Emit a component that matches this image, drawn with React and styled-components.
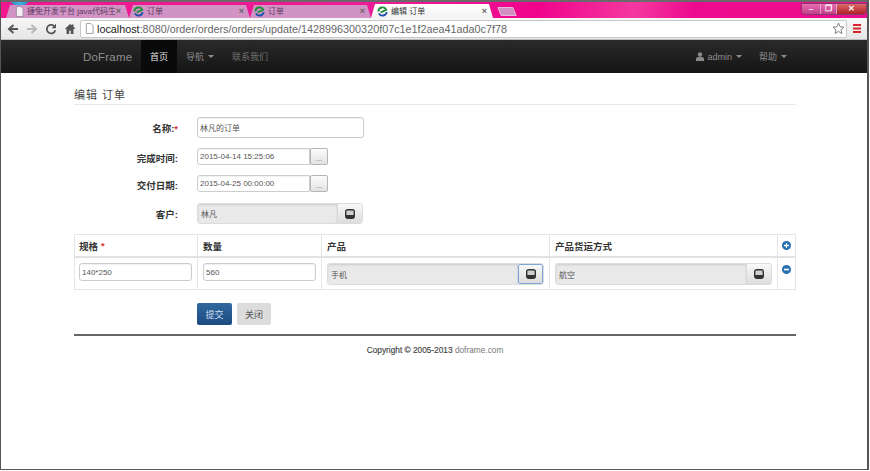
import React from "react";
import styled, { createGlobalStyle } from "styled-components";

const Global = createGlobalStyle`
  html, body { margin: 0; padding: 0; background: #fff; }
  body { width: 870px; height: 471px; overflow: hidden; font-family: "Liberation Sans", "Noto Sans CJK SC", sans-serif; }
  * { box-sizing: border-box; }
`;
const CJK = `"Liberation Sans", "Noto Sans CJK SC", sans-serif`;

const Win = styled.div`
  width: 869px; height: 470px; display: flex; flex-direction: column;
  border: 1px solid #555; border-top: 2px solid #6a6a6a; border-right: 2px solid #555; background: #fff; overflow: hidden;
`;
const TabStrip = styled.div`
  height: 16px; flex: none; display: flex; align-items: flex-end; padding-left: 5px; position: relative; overflow: hidden;
  background: linear-gradient(100deg, #f0188f 0%, #ec1b95 45%, #f0048c 62%, #f4389f 73%, #ee0a8e 80%, #ea0d8c 100%);
`;
const Orb = styled.div`
  position: absolute; left: 9px; top: -10px; width: 19px; height: 14px; border-radius: 50%;
  background: radial-gradient(circle at 50% 70%, #3fb6e6, #1a7bb8);
`;
const Tab = styled.div`
  width: ${p => p.$w}px; height: ${p => p.$active ? 14 : 13}px; flex: none;
  display: flex; align-items: center; padding: 0 ${p => p.$pr || 6}px 0 ${p => p.$pl || 5}px; gap: 3px; position: relative;
  background: ${p => p.$active ? "linear-gradient(#fff, #f2f2f2)" : "#d093c4"};
  clip-path: polygon(4px 0, calc(100% - 4px) 0, 100% 100%, 0 100%);
  font-size: 8px; color: ${p => p.$active ? "#333" : "#5c3a60"}; white-space: nowrap;
`;
const TabTitle = styled.span`flex: 1; min-width: 0; font-family: ${CJK}; line-height: 11px;`;
const TabClose = styled.span`font-size: 9px; font-weight: bold; color: #666; line-height: 1;`;
const NewTab = styled.div`
  width: 16px; height: 9px; margin-left: 6px; margin-bottom: 2px; flex: none; background: #d290c2;
  transform: skewX(22deg); border-radius: 1px; border: 1px solid #e8b8d8;
`;
const WinControls = styled.div`
  position: absolute; top: 1px; right: 0; width: 66px; height: 12px; display: flex;
  border: 1px solid #8a3a6a; border-radius: 0 0 4px 4px; overflow: hidden;
`;
const WinBtn = styled.div`
  flex: ${p => p.$f}; display: flex; align-items: center; justify-content: center;
  background: ${p => p.$bg}; border-right: 1px solid rgba(255,255,255,.45);
  color: #fff; font-size: 8px; font-weight: bold; line-height: 1; &:last-child { border-right: none; }
`;
const Toolbar = styled.div`
  height: 22px; flex: none; display: flex; align-items: center; background: linear-gradient(#f7f7f7, #e6e6e6);
  padding: 0 0 0 6px; border-bottom: 1px solid #bdbdbd;
`;
const ToolIcons = styled.div`width: 73px; flex: none; display: flex; gap: 7px; align-items: center;`;
const Omni = styled.div`
  flex: 1; min-width: 0; height: 18px; background: #fff; border: 1px solid #c8c8c8; border-radius: 2px;
  display: flex; align-items: center; padding: 0 1px 0 4px; gap: 3px;
  font-family: "Liberation Sans", sans-serif; font-size: 10.8px; color: #666; white-space: nowrap;
`;
const Host = styled.span`color: #222;`;
const UrlText = styled.span`flex: 1; min-width: 0;`;
const Menu = styled.div`width: 20px; flex: none; display: flex; justify-content: center;`;
const Navbar = styled.div`
  height: 33px; flex: none; background: linear-gradient(#2a2a2a, #151515); display: flex; align-items: stretch;
  padding-left: 72px; padding-right: 73px; font-size: 9px; color: #8d8d8d;
`;
const Brand = styled.div`
  font-size: 11.5px; display: flex; align-items: center; width: 68px; padding-left: 10px; color: #8f8f8f; letter-spacing: .2px; white-space: nowrap;
`;
const NavItem = styled.div`
  display: flex; align-items: center; gap: 3px; padding: 0 ${p => p.$px ?? 9}px;
  background: ${p => p.$active ? "#0a0a0a" : "transparent"};
  color: ${p => p.$active ? "#e2e2e2" : p.$dim ? "#6f6f6f" : "#8d8d8d"}; white-space: nowrap;
`;
const Caret = styled.i`
  width: 0; height: 0; border-left: 3px solid transparent; border-right: 3px solid transparent; border-top: 3px solid currentColor; margin-left: 1px;
`;
const NavSpacer = styled.div`flex: 1;`;
const Page = styled.main`flex: 1; display: flex; flex-direction: column; padding: 14px 0 0 73px; width: 795px; font-family: ${CJK};`;
const Legend = styled.div`
  font-size: 11px; letter-spacing: 1px; color: #444; height: 18px; border-bottom: 1px solid #e8e8e8; line-height: 17px;
`;
const Row = styled.div`
  display: flex; align-items: center; height: 21px; margin-top: ${p => p.$mt}px;
`;
const Label = styled.label`
  width: 104px; margin-right: 19px; text-align: right; font-size: 9.5px; font-weight: bold; color: #333; flex: none;
  padding-top: ${p => p.$pt || 0}px;
  em { color: #d33; font-style: normal; }
`;
const Input = styled.div`
  width: ${p => p.$w}px; height: ${p => p.$h || 21}px; flex: none; padding: 0 2px; display: flex; align-items: center;
  border: 1px solid #ccc; border-radius: 3px; background: #fff; font-size: 8px; color: #555; white-space: nowrap;
  box-shadow: inset 0 1px 1px rgba(0,0,0,.06);
`;
const DateInput = styled(Input)`border-radius: 3px 0 0 3px;`;
const Dots = styled.div`
  width: 18px; height: 17px; flex: none; border: 1px solid #b5b5b5; border-radius: 2px; background: linear-gradient(#fbfbfb, #e2e2e2);
  font-size: 8px; color: #777; display: flex; align-items: flex-end; justify-content: center; line-height: 11px;
`;
const Lookup = styled.div`
  width: ${p => p.$w}px; height: ${p => p.$h || 21}px; flex: none; display: flex; border-radius: 3px; overflow: hidden; border: 1px solid #dcdcdc;
`;
const LookupText = styled.div`
  flex: 1; background: #e9e9e9; font-size: 8px; color: #555; display: flex; align-items: center; padding-left: 3px;
  box-shadow: inset 0 1px 2px rgba(0,0,0,.12);
`;
const LookupBtn = styled.div`
  width: 25px; flex: none; display: flex; align-items: center; justify-content: center; background: linear-gradient(#f8f8f8, #dcdcdc);
  border-left: 1px solid #d8d8d8;
  ${p => p.$focus && "border: 1px solid #7fa6d9; border-radius: 2px; box-shadow: 0 0 2px #9dbde8;"}
`;
const Table = styled.div`
  margin-top: 10px; width: 722px; border: 1px solid #e6e6e6; display: grid; grid-template-columns: 123px 124px 228px 228px 1fr;
  grid-template-rows: 23px 31px; font-size: 10px;
`;
const Th = styled.div`
  display: flex; align-items: center; padding-left: 5px; font-weight: bold; color: #333; border-right: 1px solid #e6e6e6; border-bottom: 2px solid #e2e2e2;
  font-size: 9.5px; &:first-child { padding-left: 4px; } &:nth-child(5) { border-right: none; padding-left: 0; justify-content: center; }
  em { color: #d33; font-style: normal; margin-left: 3px; }
`;
const Td = styled.div`
  padding: 5px 5px 0 5px; border-right: 1px solid #e6e6e6;
  &:nth-child(6) { padding-left: 4px; }
  &:last-child { border-right: none; padding: 7px 0 0; display: flex; justify-content: center; align-items: flex-start; }
`;
const Actions = styled.div`display: flex; gap: 5px; margin-top: 13px; margin-left: 123px;`;
const Button = styled.div`
  height: 22px; width: ${p => p.$w}px; display: flex; align-items: center; justify-content: center; font-size: 9px; border-radius: 2px;
  color: ${p => p.$primary ? "#cfdff0" : "#555"};
  background: ${p => p.$primary ? "linear-gradient(#30699f, #1c4a80)" : "#dcdcdc"};
`;
const Rule = styled.div`width: 722px; height: 2px; background: #666; margin-top: 9px;`;
const Footer = styled.footer`
  width: 722px; text-align: center; font-size: 8.3px; color: #444; margin-top: 9px; font-weight: 500;
  -webkit-text-stroke: .15px #444;
  a { color: #777; -webkit-text-stroke: 0; }
`;

const Favicon = () => (
  <svg width="11" height="11" viewBox="0 0 12 12" style={{ flex: "none" }}>
    <path d="M1.500 6a4.500 4.500 0 0 1 8.600-1.800L4 7" fill="none" stroke="#1f8f3a" strokeWidth="2" />
    <path d="M10.600 6.600A4.600 4.600 0 0 1 2 8" fill="none" stroke="#1a4fa8" strokeWidth="2" />
  </svg>
);
const DocIcon = () => (
  <svg width="9" height="11" viewBox="0 0 10 12" style={{ flex: "none" }}>
    <path d="M1.500.5h5l2.500 2.500v8.500h-7.500z" fill="#f4eef3" stroke="#9c8a9c" />
  </svg>
);
const PageIcon = () => (
  <svg width="9" height="11" viewBox="0 0 10 12" style={{ flex: "none" }}>
    <path d="M1.500.5h5l2.500 2.500v8.500h-7.500z" fill="#fff" stroke="#999" />
  </svg>
);
const Arrow = ({ dir, color }) => (
  <svg width="12" height="12" viewBox="0 0 12 12">
    <path d={dir === "left" ? "M11 6H3M6.500 2L2 6l4.500 4" : "M1 6h8M5.500 2L10 6l-4.500 4"} fill="none" stroke={color} strokeWidth="2" />
  </svg>
);
const Reload = () => (
  <svg width="12" height="12" viewBox="0 0 12 12">
    <path d="M10 4.200A4.300 4.300 0 1 0 10.300 7.200" fill="none" stroke="#555" strokeWidth="1.800" />
    <path d="M11 .8v4.400H6.600z" fill="#555" />
  </svg>
);
const Home = () => (
  <svg width="12" height="12" viewBox="0 0 12 12">
    <path d="M6 1L.8 6h1.700v5h2.700V7.800h1.600V11h2.700V6h1.700L9.500 3.600V1.500H8v.7z" fill="#555" />
  </svg>
);
const Star = () => (
  <svg width="13" height="13" viewBox="0 0 14 14" style={{ flex: "none" }}>
    <path d="M7 1.200l1.700 3.900 4.200.4-3.200 2.800 1 4.100L7 10.200l-3.700 2.200 1-4.100L1.100 5.500l4.200-.4z" fill="#fff" stroke="#777" />
  </svg>
);
const Burger = () => (
  <svg width="8" height="9" viewBox="0 0 8 9">
    <path d="M0 0h8v2H0zM0 3.500h8v2H0zM0 7h8v2H0z" fill="#d9262c" />
  </svg>
);
const User = () => (
  <svg width="8" height="9" viewBox="0 0 8 9">
    <circle cx="4" cy="2.500" r="2.200" fill="#888" />
    <path d="M0 9V7c0-1.500 1.500-2.300 4-2.300S8 5.500 8 7v2z" fill="#888" />
  </svg>
);
const Pick = () => (
  <svg width="10" height="10" viewBox="0 0 10 10">
    <rect x=".7" y=".7" width="8.600" height="8.600" rx="2" fill="#cfcfcf" stroke="#333" strokeWidth="1.400" />
    <rect x="1" y="6" width="8" height="3" fill="#333" />
  </svg>
);
const RoundIcon = ({ plus }) => (
  <svg width="9" height="9" viewBox="0 0 9 9">
    <circle cx="4.500" cy="4.500" r="4.500" fill="#2a6fb0" />
    <path d={plus ? "M2 3.800h2V2h1v1.800h2v1.400H5V7H4V5.200H2z" : "M2 3.700h5v1.600H2z"} fill="#fff" />
  </svg>
);

export default function App() {
  return (
    <>
      <Global />
      <Win>
        <TabStrip>
          <Orb />
          <Tab $w={123} $pl={9} $pr={8}><DocIcon /><TabTitle>捷免开发平台 java代码生</TabTitle><TabClose>×</TabClose></Tab>
          <Tab $w={121} $pl={4}><Favicon /><TabTitle>订单</TabTitle><TabClose>×</TabClose></Tab>
          <Tab $w={121} $pl={4}><Favicon /><TabTitle>订单</TabTitle><TabClose>×</TabClose></Tab>
          <Tab $w={122} $active $pl={6}><Favicon /><TabTitle>编辑 订单</TabTitle><TabClose>×</TabClose></Tab>
          <NewTab />
          <WinControls>
            <WinBtn $f={19} $bg="linear-gradient(#e86cb0,#c0408a)">–</WinBtn>
            <WinBtn $f={16} $bg="linear-gradient(#e86cb0,#c0408a)">❐</WinBtn>
            <WinBtn $f={30} $bg="linear-gradient(#dc6a6a,#b02028)">✕</WinBtn>
          </WinControls>
        </TabStrip>
        <Toolbar>
          <ToolIcons>
            <Arrow dir="left" color="#555" />
            <Arrow dir="right" color="#b8b8b8" />
            <Reload />
            <Home />
          </ToolIcons>
          <Omni>
            <PageIcon />
            <UrlText><Host>localhost</Host>:8080/order/orders/orders/update/1428996300320f07c1e1f2aea41ada0c7f78</UrlText>
            <Star />
          </Omni>
          <Menu><Burger /></Menu>
        </Toolbar>
        <Navbar>
          <Brand>DoFrame</Brand>
          <NavItem $active>首页</NavItem>
          <NavItem>导航 <Caret /></NavItem>
          <NavItem $dim>联系我们</NavItem>
          <NavSpacer />
          <NavItem $px={10}><User />admin <Caret /></NavItem>
          <NavItem $px={7}>帮助 <Caret /></NavItem>
        </Navbar>
        <Page>
          <Legend>编辑 订单</Legend>
          <Row $mt={12}><Label>名称:<em>*</em></Label><Input $w={167}>林凡的订单</Input></Row>
          <Row $mt={8}><Label $pt={2}>完成时间:</Label><DateInput $w={113} $h={17}>2015-04-14 15:25:06</DateInput><Dots>...</Dots></Row>
          <Row $mt={6}><Label $pt={2}>交付日期:</Label><DateInput $w={113} $h={17}>2015-04-25 00:00:00</DateInput><Dots>...</Dots></Row>
          <Row $mt={9}><Label>客户:</Label><Lookup $w={166}><LookupText>林凡</LookupText><LookupBtn><Pick /></LookupBtn></Lookup></Row>
          <Table>
            <Th>规格<em>*</em></Th>
            <Th>数量</Th>
            <Th>产品</Th>
            <Th>产品货运方式</Th>
            <Th><RoundIcon plus /></Th>
            <Td><Input $w={113} $h={18}>140*250</Input></Td>
            <Td><Input $w={113} $h={18}>560</Input></Td>
            <Td><Lookup $w={217} $h={22}><LookupText>手机</LookupText><LookupBtn $focus><Pick /></LookupBtn></Lookup></Td>
            <Td><Lookup $w={217} $h={22}><LookupText>航空</LookupText><LookupBtn><Pick /></LookupBtn></Lookup></Td>
            <Td><RoundIcon /></Td>
          </Table>
          <Actions>
            <Button $primary $w={35}>提交</Button>
            <Button $w={34}>关闭</Button>
          </Actions>
          <Rule />
          <Footer>Copyright © 2005-2013 <a>doframe.com</a></Footer>
        </Page>
      </Win>
    </>
  );
}
